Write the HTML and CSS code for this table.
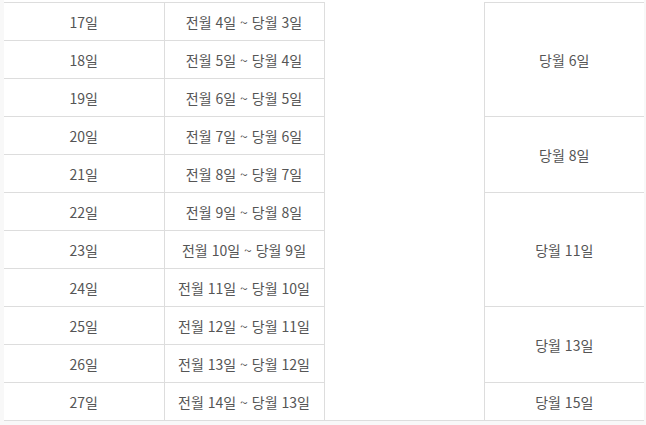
FILE: index.html
```html
<!DOCTYPE html>
<html lang="ko">
<head>
<meta charset="utf-8">
<link rel="stylesheet" href="styles.css">
</head>
<body>
<div class="wrap">
<table class="sched">
<colgroup><col class="c"><col class="c"><col class="c"><col class="c"></colgroup>
<tbody>
<tr><td>17일</td><td>전월 4일 ~ 당월 3일</td><td class="blank" rowspan="11"></td><td rowspan="3">당월 6일</td></tr>
<tr><td>18일</td><td>전월 5일 ~ 당월 4일</td></tr>
<tr><td>19일</td><td>전월 6일 ~ 당월 5일</td></tr>
<tr><td>20일</td><td>전월 7일 ~ 당월 6일</td><td rowspan="2">당월 8일</td></tr>
<tr><td>21일</td><td>전월 8일 ~ 당월 7일</td></tr>
<tr><td>22일</td><td>전월 9일 ~ 당월 8일</td><td rowspan="3">당월 11일</td></tr>
<tr><td>23일</td><td>전월 10일 ~ 당월 9일</td></tr>
<tr><td>24일</td><td>전월 11일 ~ 당월 10일</td></tr>
<tr><td>25일</td><td>전월 12일 ~ 당월 11일</td><td rowspan="2">당월 13일</td></tr>
<tr><td>26일</td><td>전월 13일 ~ 당월 12일</td></tr>
<tr><td>27일</td><td>전월 14일 ~ 당월 13일</td><td>당월 15일</td></tr>
</tbody>
</table>
</div>
</body>
</html>
```
FILE: styles.css
```css
html, body {
  margin: 0;
  padding: 0;
  background: #f8f8f8;
}
body {
  font-family: "Noto Sans CJK KR", "Noto Sans", sans-serif;
  font-size: 14px;
  color: #555;
}
.wrap {
  margin-left: 4px;
  width: 640px;
  padding-top: 2px;
  background: #fff;
}
.sched {
  width: 640px;
  border-collapse: collapse;
  table-layout: fixed;
}
.sched .c {
  width: 160px;
}
.sched td {
  height: 37px;
  padding: 0;
  text-align: center;
  vertical-align: middle;
  border: 1px solid #ddd;
  line-height: 18px;
}
.sched tr td:first-child {
  border-left: none;
}
.sched tr td:last-child {
  border-right: none;
}
.sched td.blank {
  border-top: none;
}
```
